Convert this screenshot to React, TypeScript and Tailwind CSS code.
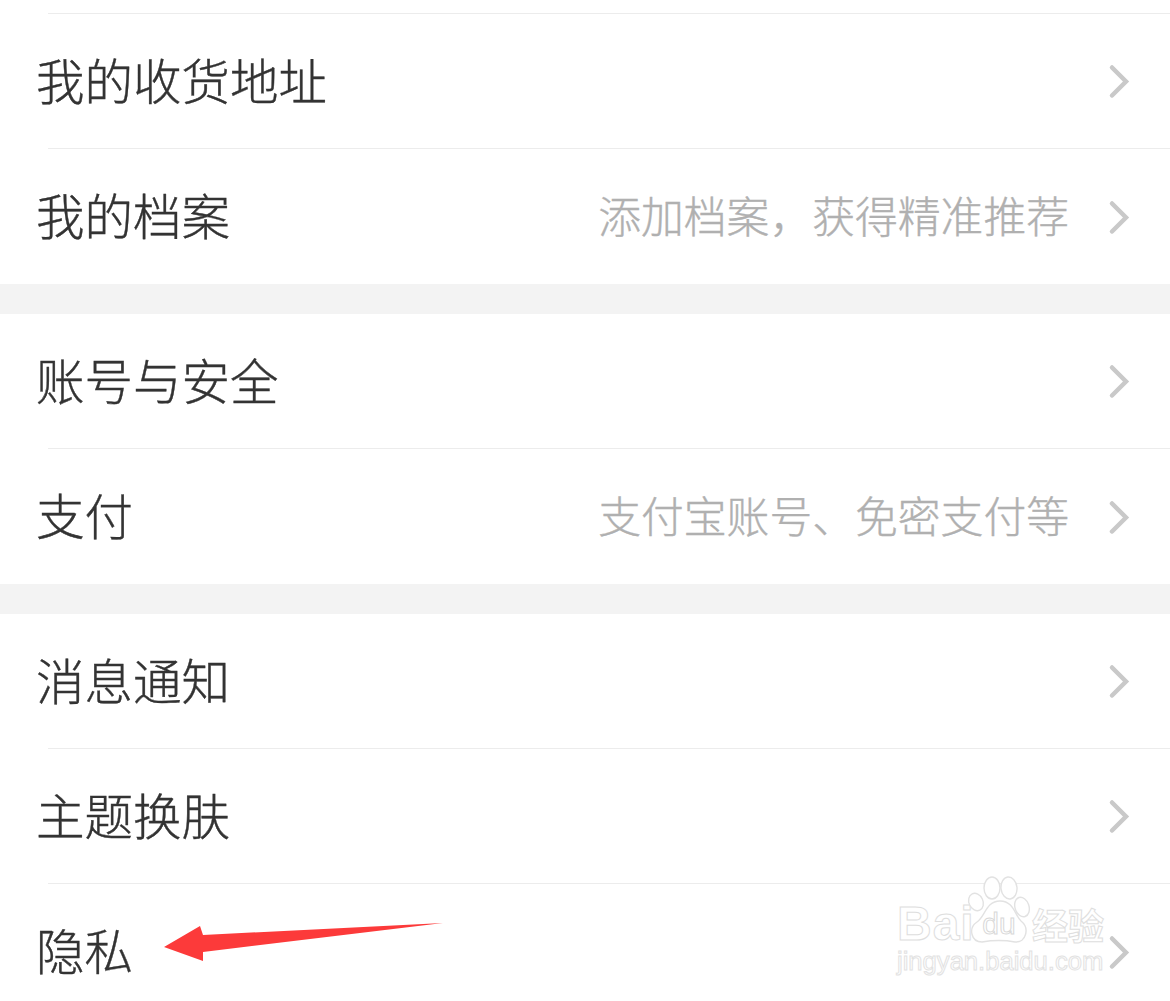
const sections = [
  [
    { label: '我的收货地址' },
    { label: '我的档案', hint: '添加档案，获得精准推荐' },
  ],
  [
    { label: '账号与安全' },
    { label: '支付', hint: '支付宝账号、免密支付等' },
  ],
  [
    { label: '消息通知' },
    { label: '主题换肤' },
    { label: '隐私' },
  ],
]

function Chevron() {
  return (
    <svg width="24" height="36" viewBox="0 0 24 36" fill="none" className="shrink-0">
      <path d="M4 4.5 L18 18.5 L4 32.5" stroke="#c9c9c9" strokeWidth="4.5" strokeLinecap="round" strokeLinejoin="miter" />
    </svg>
  )
}

function Row({ label, hint, last }: { label: string; hint?: string; last: boolean }) {
  return (
    <div className="pl-[48px]">
      <div className={`flex h-[135px] items-center pr-[38px] ${last ? '' : 'border-b border-[#ececec]'}`}>
        <span className="-ml-[12px] mb-[4px] flex-1 text-[48.5px] leading-none font-light text-[#333333] [-webkit-text-stroke:0.4px_#333333]">{label}</span>
        {hint && <span className="mr-[39px] mb-[4px] text-[42.8px] leading-none font-light text-[#b0b0b0] [-webkit-text-stroke:0.4px_#b0b0b0]">{hint}</span>}
        <Chevron />
      </div>
    </div>
  )
}

function Watermark() {
  return (
    <div className="absolute left-[897px] top-[876px] flex w-[212px] flex-col">
      <div className="flex h-[68px] items-end">
        <span className="mb-[-4px] w-[69px] text-[48px] leading-none font-bold tracking-[1px] text-white [-webkit-text-stroke:1px_#dedede] [font-family:'Liberation_Sans',sans-serif]">Bai</span>
        <div className="relative h-[68px] w-[66px]">
          <svg width="66" height="68" viewBox="0 0 66 68" fill="#fff" stroke="#e2e2e2" strokeWidth="1.4">
            <ellipse cx="10" cy="26" rx="7" ry="9" transform="rotate(-25 10 26)" />
            <ellipse cx="26" cy="12" rx="8" ry="11" />
            <ellipse cx="43" cy="12" rx="8" ry="11" transform="rotate(-6 43 12)" />
            <ellipse cx="56" cy="31" rx="7" ry="10" transform="rotate(-18 56 31)" />
            <path d="M16 66 C5 66 2 52 11 46 C19 41 20 25 34 25 C48 25 49 40 55 45 C64 52 60 67 49 66 C38 64 28 64 16 66 Z" />
          </svg>
          <span className="absolute inset-x-0 bottom-[5px] text-center text-[30px] leading-none text-white [-webkit-text-stroke:1px_#d8d8d8] [font-family:'Liberation_Sans',sans-serif]">du</span>
        </div>
        <span className="mb-[2px] text-[36px] leading-none font-bold text-white [-webkit-text-stroke:1px_#dedede]">经验</span>
      </div>
      <span className="mt-[5px] text-[25.6px] leading-none whitespace-nowrap text-white [-webkit-text-stroke:1px_#e2e2e2] [font-family:'Liberation_Sans',sans-serif]">jingyan.baidu.com</span>
    </div>
  )
}

export default function App() {
  return (
    <div className="relative h-[1001px] w-[1170px] overflow-hidden bg-white [font-family:'Noto_Sans_CJK_SC','Noto_Sans',sans-serif]">
      <div className="ml-[48px] h-[14px] border-b border-[#ececec]" />
      {sections.map((rows, i) => (
        <div key={i} className={i < sections.length - 1 ? 'border-b-[30px] border-[#f3f3f3]' : ''}>
          {rows.map((row, j) => (
            <Row key={row.label} label={row.label} hint={row.hint} last={j === rows.length - 1} />
          ))}
        </div>
      ))}

      <Watermark />

      {/* red annotation arrow */}
      <svg width="290" height="50" viewBox="0 0 290 50" className="absolute left-[160px] top-[918px]">
        <polygon points="4,29 40,8 43,17 283,5 43,34 43,43" fill="#fc3a3a" />
      </svg>
    </div>
  )
}
